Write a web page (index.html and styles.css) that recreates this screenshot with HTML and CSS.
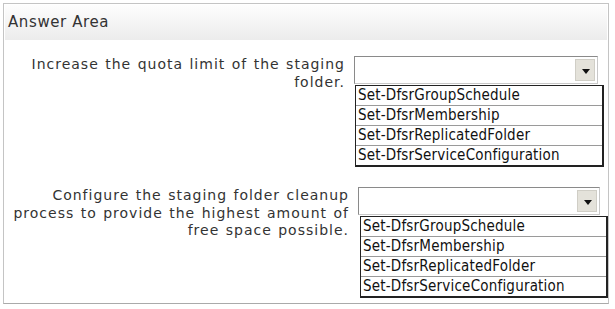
FILE: index.html
```html
<!DOCTYPE html>
<html lang="en">
<head>
    <meta charset="UTF-8">
    <title>Answer Area</title>
    <link rel="stylesheet" href="styles.css">
</head>
<body>
    <div class="frame">
        <div class="header">Answer Area</div>

        <div class="row row-first">
            <div class="question">Increase the quota limit of the staging folder.</div>
            <div class="answer">
                <div class="select"><span class="arrow"></span></div>
                <ul class="options">
                    <li>Set-DfsrGroupSchedule</li>
                    <li>Set-DfsrMembership</li>
                    <li>Set-DfsrReplicatedFolder</li>
                    <li>Set-DfsrServiceConfiguration</li>
                </ul>
            </div>
        </div>

        <div class="row row-second">
            <div class="question">Configure the staging folder cleanup process to provide the highest amount of free space possible.</div>
            <div class="answer">
                <div class="select"><span class="arrow"></span></div>
                <ul class="options">
                    <li>Set-DfsrGroupSchedule</li>
                    <li>Set-DfsrMembership</li>
                    <li>Set-DfsrReplicatedFolder</li>
                    <li>Set-DfsrServiceConfiguration</li>
                </ul>
            </div>
        </div>
    </div>
</body>
</html>
```

FILE: styles.css
```css
body { margin: 0; padding: 3px; background: #fff; font-family: "DejaVu Sans", Verdana, sans-serif; color: #222; }
.frame { width: 606px; height: 301px; border: 1px solid #c4c4c4; border-bottom-color: #aaa; box-sizing: border-box; padding: 1px; }
.header { height: 35px; line-height: 35px; padding-left: 3px; font-size: 15px; letter-spacing: 0.6px; color: #333; background: linear-gradient(#fdfdfd, #ececec); }
.row { display: flex; }
.row-first { margin-top: 16px; }
.row-second { margin-top: 20px; }
.question { width: 340px; flex-shrink: 0; text-align: right; font-size: 14px; line-height: 17.5px; letter-spacing: 1px; word-spacing: 1px; color: #333; }
.answer { margin-left: 9px; }
.row-second .question { width: 344px; }
.row-second .answer { margin-left: 9px; }
.select { width: 244px; height: 28px; box-sizing: border-box; border: 1px solid #8a8a8a; border-right-color: #c8c8c8; border-bottom-color: #c8c8c8; background: #fff; display: flex; justify-content: flex-end; align-items: center; padding-right: 2px; }
.row-second .select { width: 242px; }
.arrow { width: 20px; height: 22px; background: #e4e2da; border: 1px solid #d0cec6; box-sizing: border-box; position: relative; }
.arrow::after { content: ""; position: absolute; left: 6px; top: 9px; border-left: 4px solid transparent; border-right: 4px solid transparent; border-top: 5px solid #111; }
.options { list-style: none; margin: 1px 0 0 1px; padding: 0; width: 246px; border: 1px solid #222; border-right-width: 2px; border-bottom-width: 2px; font-family: "DejaVu Sans Condensed", Tahoma, sans-serif; font-size: 15px; letter-spacing: 0.2px; }
.row-second .options { margin-left: 2px; width: 245px; }
.options li { height: 19px; line-height: 19px; padding-left: 2px; border-top: 1px solid #9a9a9a; color: #111; white-space: nowrap; }
.options li:first-child { border-top: none; }
```
